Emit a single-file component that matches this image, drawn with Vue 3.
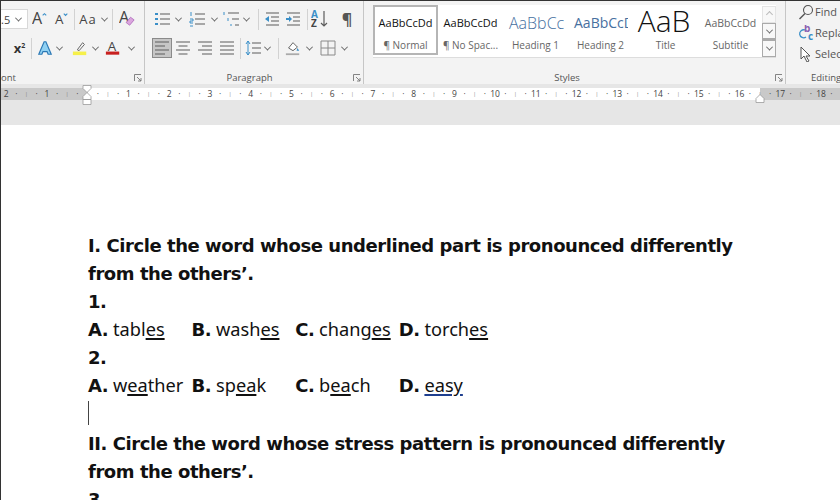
<template>
  <div class="word">
    <!-- ribbon -->
    <div class="ribbon">
      <section class="group font-group">
        <div class="tool-row font-r1">
          <div class="size-box"><span>.5</span><i class="chev"></i></div>
          <svg class="ic" viewBox="0 0 18 18"><text x="0" y="15" class="glyph">A</text><path d="M12 5l2-2 2 2" class="ln blue"/></svg>
          <svg class="ic" viewBox="0 0 18 18"><text x="1" y="15" class="glyph small">A</text><path d="M11 3l2 2 2-2" class="ln blue"/></svg>
          <b class="sep"></b>
          <div class="split"><span class="aa">Aa</span><i class="chev"></i></div>
          <b class="sep"></b>
          <svg class="ic" viewBox="0 0 18 18"><text x="0" y="14" class="glyph">A</text><path d="M8 13l5-6 4 3-5 6z" fill="#dba6de" stroke="#a65fb5" stroke-width=".8"/></svg>
        </div>
        <div class="tool-row font-r2">
          <span></span>
          <span class="sup">x<sup>2</sup></span>
          <span></span>
          <b class="sep"></b>
          <span></span>
          <svg class="ic" viewBox="0 0 18 18"><path d="M2 16L8 2h2l6 14h-3.500l-1.200-3H6.700l-1.200 3z" fill="#8fd0f2" stroke="#2b78b5" stroke-width="1.300"/></svg>
          <i class="chev"></i>
          <svg class="ic" viewBox="0 0 18 18"><path d="M6 11l6-8 2 2-6 7z" fill="none" stroke="#666" stroke-width="1.100"/><rect x="1" y="13" width="15" height="4" fill="#f6f04a"/></svg>
          <i class="chev"></i>
          <svg class="ic" viewBox="0 0 18 18"><text x="3" y="12" class="glyph small">A</text><rect x="1" y="13" width="15" height="3.500" fill="#c8201f"/></svg>
          <i class="chev"></i>
        </div>
        <div class="group-label"><span class="cut-label">ont</span><svg class="launcher" viewBox="0 0 8 8"><path d="M.5 7V.5H7M3 3l4 4M7 4v3H4" /></svg></div>
      </section>

      <section class="group para-group">
        <div class="tool-row para-r1">
          <svg class="ic" viewBox="0 0 16 16"><path d="M1 3h3M1 8h3M1 13h3" class="dots"/><path d="M6 3h10M6 8h10M6 13h10" class="ln"/></svg>
          <i class="chev"></i>
          <svg class="ic" viewBox="0 0 16 16"><path d="M2 1v4M1 8h3v2H1v2h3M1 15h3" class="num"/><path d="M6 3h10M6 8h10M6 13h10" class="ln"/></svg>
          <i class="chev"></i>
          <svg class="ic" viewBox="0 0 16 16"><path d="M1 1v3M5 7v3M8 13v2" class="num"/><path d="M5 2h11M9 8h7M12 14h4" class="ln"/></svg>
          <i class="chev"></i>
          <b class="sep"></b>
          <svg class="ic" viewBox="0 0 16 16"><path d="M1 8l4-3v6z" fill="#3a8fc8"/><path d="M2 2h13M7 6h8M7 10h8M2 14h13" class="ln"/></svg>
          <svg class="ic" viewBox="0 0 16 16"><path d="M1 8h4" class="dots"/><path d="M7 8l-3-3v6z" fill="#3a8fc8"/><path d="M2 2h13M8 6h7M8 10h7M2 14h13" class="ln"/></svg>
          <b class="sep"></b>
          <svg class="ic wide" viewBox="0 0 18 18"><text x="0" y="8" class="glyph tiny blue-fill">A</text><text x="0" y="17" class="glyph tiny">Z</text><path d="M13 1v15M10 13l3 3 3-3" class="ln"/></svg>
          <span class="pilcrow">¶</span>
        </div>
        <div class="tool-row para-r2">
          <div class="active-btn">
            <svg class="ic" viewBox="0 0 16 16"><path d="M1 2h14M1 6h10M1 10h14M1 14h10" class="ln"/></svg>
          </div>
          <svg class="ic" viewBox="0 0 16 16"><path d="M1 2h14M3.500 6h9M1 10h14M3.500 14h9" class="ln"/></svg>
          <svg class="ic" viewBox="0 0 16 16"><path d="M1 2h14M5 6h10M1 10h14M5 14h10" class="ln"/></svg>
          <svg class="ic" viewBox="0 0 16 16"><path d="M1 2h14M1 6h14M1 10h14M1 14h14" class="ln"/></svg>
          <b class="sep"></b>
          <svg class="ic" viewBox="0 0 16 16"><path d="M3 1v14M1 4l2-3 2 3M1 12l2 3 2-3" class="num"/><path d="M7 3h9M7 8h9M7 13h9" class="ln"/></svg>
          <i class="chev"></i>
          <b class="sep"></b>
          <svg class="ic" viewBox="0 0 18 18"><path d="M4 9l5-6 5 5-5 4z" fill="#fff" stroke="#555"/><path d="M14 9l2 3-3 0z" fill="#3a8fc8"/><path d="M1 16h15" stroke="#aaa" stroke-width="2"/></svg>
          <i class="chev"></i>
          <svg class="ic" viewBox="0 0 16 16"><path d="M1 1h14v14H1zM8 1v14M1 8h14" fill="none" stroke="#8a8a8a"/></svg>
          <i class="chev"></i>
        </div>
        <div class="group-label">Paragraph<svg class="launcher" viewBox="0 0 8 8"><path d="M.5 7V.5H7M3 3l4 4M7 4v3H4" /></svg></div>
      </section>

      <section class="group styles-group">
        <div class="gallery">
          <div v-for="s in styles" :key="s.name" class="style-card" :class="[s.cls, { selected: s.selected }]">
            <div class="sample">{{ s.sample }}</div>
            <div class="style-name">{{ s.name }}</div>
          </div>
          <div class="gallery-scroll">
            <button class="off"><i class="chev up"></i></button>
            <button><i class="chev"></i></button>
            <button class="more"><i class="chev"></i></button>
          </div>
        </div>
        <div class="group-label">Styles<svg class="launcher" viewBox="0 0 8 8"><path d="M.5 7V.5H7M3 3l4 4M7 4v3H4" /></svg></div>
      </section>

      <section class="group edit-group">
        <div class="edit-list">
          <div class="edit-item">
            <svg class="ic" viewBox="0 0 16 16"><circle cx="10" cy="6" r="4.500" fill="none" stroke="#555" stroke-width="1.100"/><path d="M7 9.500L1.500 15" stroke="#555" stroke-width="1.400"/></svg>Find
          </div>
          <div class="edit-item">
            <svg class="ic" viewBox="0 0 16 16"><path d="M7 5a4 4 0 1 0 1 7" fill="none" stroke="#3a8fc8" stroke-width="1.300"/><text x="6" y="7" class="glyph tiny purple">b</text><text x="10" y="15" class="glyph tiny blue-fill">c</text></svg>Repla
          </div>
          <div class="edit-item">
            <svg class="ic" viewBox="0 0 16 16"><path d="M3 1v12l3-3 3 6 2-1-3-5h4z" fill="#fff" stroke="#555"/></svg>Selec
          </div>
        </div>
        <div class="group-label editing">Editing</div>
      </section>
    </div>

    <!-- ruler -->
    <div class="ruler-area">
      <div class="ruler">
        <span v-for="(t, i) in ticks" :key="i" class="tick" :class="{ bar: t === '|' }">{{ t }}</span>
        <svg class="indent-mark left-mark" viewBox="0 0 10 20">
          <path d="M1 .5h8v3L5 7.500 1 3.500zM5 7.500l4 4v3H1v-3zM1 14.500h8v5H1z" fill="#fff" stroke="#9a9a9a" stroke-width=".8"/>
        </svg>
        <svg class="indent-mark right-mark" viewBox="0 0 10 9">
          <path d="M5 .5l4 4v4H1v-4z" fill="#fff" stroke="#9a9a9a" stroke-width=".8"/>
        </svg>
      </div>
    </div>

    <!-- page -->
    <div class="page">
      <p class="line strong">I. Circle the word whose underlined part is pronounced differently</p>
      <p class="line strong">from the others’.</p>
      <p class="line strong">1.</p>
      <div class="line answers">
        <span><b>A.</b> tabl<u>es</u></span>
        <span><b>B.</b> wash<u>es</u></span>
        <span><b>C.</b> chang<u>es</u></span>
        <span><b>D.</b> torch<u>es</u></span>
      </div>
      <p class="line strong">2.</p>
      <div class="line answers">
        <span><b>A.</b> w<u>ea</u>ther</span>
        <span><b>B.</b> sp<u>ea</u>k</span>
        <span><b>C.</b> b<u>ea</u>ch</span>
        <span><b>D.</b> <u class="spell">easy</u></span>
      </div>
      <div class="line"><i class="caret"></i></div>
      <p class="line strong">II. Circle the word whose stress pattern is pronounced differently</p>
      <p class="line strong">from the others’.</p>
      <p class="line strong">3.</p>
    </div>
  </div>
</template>

<script setup>
const styles = [
  { name: '¶ Normal', sample: 'AaBbCcDd', cls: 'normal', selected: true },
  { name: '¶ No Spac...', sample: 'AaBbCcDd', cls: 'normal' },
  { name: 'Heading 1', sample: 'AaBbCcD', cls: 'h1' },
  { name: 'Heading 2', sample: 'AaBbCcDd', cls: 'h2' },
  { name: 'Title', sample: 'AaB', cls: 'title' },
  { name: 'Subtitle', sample: 'AaBbCcDd', cls: 'subtitle' }
]

// ruler runs from 2 left of the margin to 18, four cells per unit
const ticks = []
for (let n = -2; n <= 18; n++) {
  ticks.push(n === 0 ? '' : String(Math.abs(n)), '·', '|', '·')
}
</script>

<style>
html, body {
  margin: 0;
  background: #fff;
}
</style>

<style scoped>
.word {
  width: 840px;
  height: 500px;
  overflow: hidden;
  display: flex;
  flex-direction: column;
  background: #e6e6e6;
  font-family: "Open Sans", "Noto Sans", sans-serif;
  border-top: 1px solid #333;
  border-left: 1px solid #333;
  box-sizing: border-box;
}
.ribbon {
  height: 83px;
  flex: none;
  display: flex;
  background: #f3f3f3;
  color: #444;
}
.group {
  flex: none;
  display: flex;
  flex-direction: column;
  border-right: 1px solid #c6c6c6;
  box-sizing: border-box;
  position: relative;
}
.font-group { width: 144px; }
.para-group { width: 219px; padding-left: 7px; }
.styles-group { width: 422px; padding-left: 9px; }
.edit-group { flex: 1; border-right: 0; padding-left: 12px; overflow: hidden; }

.tool-row {
  display: grid;
  align-items: center;
  justify-items: center;
  height: 22px;
  margin-top: 7px;
}
.font-r1 { grid-template-columns: 27px 23px 22px 2px 36px 2px 28px; }
.font-r2 { grid-template-columns: 12px 13px 5px 1px 5px 15px 14px 27px 5px 30px 6px; }
.para-r1 { grid-template-columns: 19px 15px 21px 14px 20px 11px 12px 16px 26px 2px 24px 30px; }
.para-r2 { grid-template-columns: 20px 22px 22px 21px 6px 20px 9px 12px 18px 14px 24px 8px; }

.ic {
  width: 16px;
  height: 16px;
  display: block;
  flex: none;
}
.ic.wide {
  width: 18px;
  height: 18px;
}
.ln {
  fill: none;
  stroke: #5c5c5c;
  stroke-width: 1.2;
}
.ln.blue { stroke: #3a8fc8; }
.dots {
  fill: none;
  stroke: #3a8fc8;
  stroke-width: 2;
}
.num {
  fill: none;
  stroke: #3a8fc8;
  stroke-width: 1;
}
.glyph {
  font-size: 18px;
  fill: #444;
}
.glyph.small { font-size: 15px; }
.glyph.tiny { font-size: 10px; font-weight: 700; }
.blue-fill { fill: #3a8fc8; }
.purple { fill: #8a5fb0; }
.sep {
  width: 1px;
  height: 21px;
  background: #d2d2d2;
}
.chev {
  display: block;
  width: 4px;
  height: 4px;
  border-right: 1.2px solid #666;
  border-bottom: 1.2px solid #666;
  transform: rotate(45deg) translate(-1px, -1px);
}
.chev.up { transform: rotate(225deg); border-color: #bbb; }
.size-box {
  width: 27px;
  height: 20px;
  box-sizing: border-box;
  background: #fff;
  border: 1px solid #d8d8d8;
  border-left: 0;
  display: flex;
  align-items: center;
  justify-content: space-between;
  padding-right: 6px;
  font-size: 11px;
}
.split {
  display: flex;
  align-items: center;
  gap: 5px;
}
.aa { font-size: 13px; letter-spacing: 1px; }
.sup {
  font-size: 13px;
  font-weight: 700;
  color: #333;
  white-space: nowrap;
}
.sup sup {
  font-size: 7px;
  line-height: 0;
}
.pilcrow {
  font-size: 16px;
  font-weight: 700;
  color: #555;
}
.active-btn {
  width: 20px;
  height: 20px;
  background: #c6c6c6;
  border: 1px solid #8a8a8a;
  box-sizing: border-box;
  display: flex;
  align-items: center;
  justify-content: center;
}
.group-label {
  margin-top: auto;
  height: 13px;
  margin-bottom: 0;
  text-align: center;
  font-size: 9.500px;
  line-height: 13px;
  color: #555;
}
.para-group .group-label { padding-right: 16px; }
.styles-group .group-label { padding-right: 24px; }
.cut-label {
  display: block;
  text-align: left;
}
.launcher {
  position: absolute;
  right: 2px;
  bottom: 2px;
  width: 8px;
  height: 8px;
  fill: none;
  stroke: #777;
  stroke-width: .9;
}

.gallery {
  margin-top: 4px;
  height: 53px;
  display: flex;
  background: #fff;
  border-bottom: 1px solid #ddd;
  width: 403px;
  box-sizing: border-box;
}
.style-card {
  width: 65px;
  flex: none;
  height: 50px;
  box-sizing: border-box;
  text-align: center;
  overflow: hidden;
  padding: 0 2px;
  border: 2px solid transparent;
}
.style-card.selected {
  border-color: #b5b5b5;
}
.sample {
  height: 30px;
  line-height: 32px;
  white-space: nowrap;
  overflow: hidden;
  font-size: 11px;
  color: #111;
}
.style-name {
  font-size: 10px;
  line-height: 16px;
  color: #666;
  white-space: nowrap;
}
.h1 .sample {
  font-size: 16px;
  color: #47709f;
  font-weight: 300;
  text-align: left;
  padding-left: 2px;
  width: 55px;
}
.h2 .sample {
  font-size: 14px;
  color: #47709f;
  text-align: left;
  padding-left: 2px;
  width: 54px;
}
.title .sample {
  font-size: 30px;
  line-height: 27px;
  font-weight: 300;
  color: #111;
  margin-left: -3px;
}
.subtitle .sample {
  font-size: 10.500px;
  color: #666;
}
.gallery-scroll {
  width: 13px;
  margin-left: -1px;
  display: flex;
  flex-direction: column;
  padding-top: 1px;
}
.gallery-scroll button {
  flex: 1;
  width: 14px;
  padding: 0;
  margin: 0;
  background: #f8f8f8;
  border: 1px solid #aaa;
  display: flex;
  align-items: center;
  justify-content: center;
}
.gallery-scroll button.off { border-color: #e4e4e4; }
.gallery-scroll button.more { border-top: 2px solid #aaa; }
.edit-list {
  display: flex;
  flex-direction: column;
}
.edit-item {
  height: 21px;
  display: flex;
  align-items: center;
  gap: 1px;
  font-size: 11px;
  color: #555;
  white-space: nowrap;
}
.editing { text-align: left; padding-left: 13px; }

.ruler-area {
  flex: none;
  height: 41px;
  padding-top: 4px;
  box-sizing: border-box;
}
.ruler {
  height: 12px;
  display: flex;
  position: relative;
  background: linear-gradient(to right, #c9c9c9 87px, #fff 87px, #fff 759px, #c9c9c9 759px);
}
.tick {
  flex: 0 0 10.190px;
  text-align: center;
  font-size: 8.500px;
  line-height: 12px;
  color: #444;
}
.tick.bar {
  font-size: 5px;
  color: #777;
}
.indent-mark {
  position: absolute;
  display: block;
}
.left-mark {
  left: 81px;
  top: -3px;
  width: 10px;
  height: 20px;
}
.right-mark {
  left: 754px;
  top: 6px;
  width: 10px;
  height: 9px;
}

.page {
  flex: 1;
  background: #fff;
  padding: 106px 0 0 87px;
  font-family: "Noto Sans", "DejaVu Sans", sans-serif;
  font-size: 18.200px;
  color: #111;
}
.line {
  height: 28px;
  line-height: 28px;
  margin: 0;
  white-space: nowrap;
}
.strong {
  line-height: 30px;
}
.strong,
.answers b {
  font-family: "DejaVu Sans", sans-serif;
  font-weight: 700;
  font-size: 18px;
  letter-spacing: -.44px;
}
.answers {
  display: grid;
  grid-template-columns: 103.600px 103.600px 103.600px 1fr;
}
.answers u {
  text-decoration-thickness: 1.500px;
  text-underline-offset: 2px;
}
.answers u.spell { text-decoration-color: #1f3f8f; }
.caret {
  display: block;
  width: 1px;
  height: 24px;
  margin-top: 2px;
  background: #444;
}
</style>
